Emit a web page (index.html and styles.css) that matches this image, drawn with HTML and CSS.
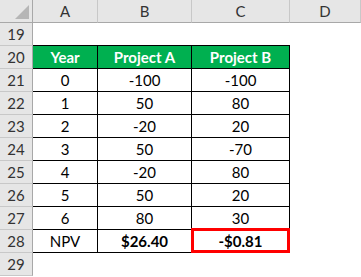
FILE: index.html
```html
<!DOCTYPE html>
<html>
<head>
<meta charset="utf-8">
<link rel="stylesheet" href="styles.css">
</head>
<body>
<div class="sheet">
  <div class="hd corner"><span class="tri"></span></div>
  <div class="hd col">A</div>
  <div class="hd col">B</div>
  <div class="hd col">C</div>
  <div class="hd col">D</div>

  <div class="rh">19</div>
  <div class="c above"></div><div class="c above"></div><div class="c above"></div><div class="c"></div>

  <div class="rh">20</div>
  <div class="c t th">Year</div><div class="c t th">Project A</div><div class="c t th">Project B</div><div class="c"></div>

  <div class="rh">21</div>
  <div class="c t">0</div><div class="c t">-100</div><div class="c t">-100</div><div class="c"></div>
  <div class="rh">22</div>
  <div class="c t">1</div><div class="c t">50</div><div class="c t">80</div><div class="c"></div>
  <div class="rh">23</div>
  <div class="c t">2</div><div class="c t">-20</div><div class="c t">20</div><div class="c"></div>
  <div class="rh">24</div>
  <div class="c t">3</div><div class="c t">50</div><div class="c t">-70</div><div class="c"></div>
  <div class="rh">25</div>
  <div class="c t">4</div><div class="c t">-20</div><div class="c t">80</div><div class="c"></div>
  <div class="rh">26</div>
  <div class="c t">5</div><div class="c t">50</div><div class="c t">20</div><div class="c"></div>
  <div class="rh">27</div>
  <div class="c t">6</div><div class="c t">80</div><div class="c t">30</div><div class="c"></div>
  <div class="rh">28</div>
  <div class="c t">NPV</div><div class="c t b">$26.40</div><div class="c t b sel">-$0.81<span class="redbox"></span></div><div class="c"></div>
  <div class="rh">29</div>
  <div class="c"></div><div class="c"></div><div class="c"></div><div class="c"></div>
</div>
</body>
</html>
```

FILE: styles.css
```css
html, body {
  margin: 0;
  padding: 0;
  background: #ffffff;
}
.sheet {
  display: grid;
  grid-template-columns: 33px 65px 94px 98px 71px;
  grid-template-rows: 23px;
  grid-auto-rows: 23px;
  font-family: Lato, "Liberation Sans", sans-serif;
  font-size: 15px;
  color: #000;
}
.sheet > div {
  box-sizing: border-box;
  display: flex;
  align-items: center;
  justify-content: center;
}
.hd {
  background: #e6e6e6;
  border-right: 1px solid #c8c8c8;
  border-bottom: 1px solid #a8a8a8;
  color: #333;
}
.corner {
  position: relative;
  border-right: 1px solid #a8a8a8;
}
.tri {
  position: absolute;
  right: 3px;
  bottom: 3px;
  width: 0;
  height: 0;
  border-left: 14px solid transparent;
  border-bottom: 14px solid #b6b6b6;
}
.rh {
  background: #e6e6e6;
  border-right: 1px solid #a8a8a8;
  border-bottom: 1px solid #c8c8c8;
  color: #333;
}
.c {
  background: #fff;
}
.above {
  border-bottom: 1px solid #000;
}
.t {
  border-right: 1px solid #000;
  border-bottom: 1px solid #000;
}
.th {
  background: #00b050 !important;
  color: #fff;
  font-weight: bold;
}
.b {
  font-weight: bold;
}
.sel {
  position: relative;
}
.redbox {
  position: absolute;
  left: -1px;
  right: -1px;
  top: -2px;
  bottom: -1px;
  border: 3px solid #ff0000;
}
```
